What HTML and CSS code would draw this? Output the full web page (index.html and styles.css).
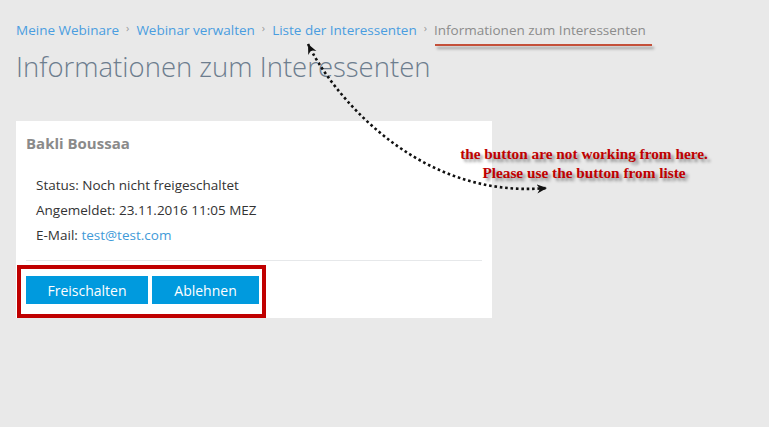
FILE: index.html
```html
<!DOCTYPE html>
<html lang="de">
<head>
<meta charset="utf-8">
<title>Informationen zum Interessenten</title>
<link rel="stylesheet" href="styles.css">
</head>
<body>
<div class="page">
  <nav class="crumbs">
    <a class="crumb link">Meine Webinare</a><span class="sep">›</span>
    <a class="crumb link">Webinar verwalten</a><span class="sep">›</span>
    <a class="crumb link">Liste der Interessenten</a><span class="sep">›</span>
    <span class="crumb current">Informationen zum Interessenten</span>
  </nav>
  <h1 class="title">Informationen zum Interessenten</h1>
  <section class="card">
    <h2 class="name">Bakli Boussaa</h2>
    <div class="details">
      <div class="row"><span class="label">Status:</span> Noch nicht freigeschaltet</div>
      <div class="row"><span class="label">Angemeldet:</span> 23.11.2016 11:05 MEZ</div>
      <div class="row"><span class="label">E-Mail:</span> <a class="mail">test@test.com</a></div>
    </div>
    <div class="divider"></div>
    <div class="actions">
      <button class="btn btn-approve">Freischalten</button>
      <button class="btn btn-reject">Ablehnen</button>
    </div>
  </section>
</div>
<div class="note">the button are not working from here.<br>Please use the button from liste</div>
<svg class="arrow" width="769" height="427" viewBox="0 0 769 427">
  <defs>
    <marker id="head" markerUnits="userSpaceOnUse" markerWidth="12" markerHeight="10" refX="10" refY="4.5" orient="auto-start-reverse">
      <path d="M0,0 L10,4.5 L0,9 L3,4.5 Z" fill="#111"/>
    </marker>
  </defs>
  <path d="M308,44 C330,90 415,200 547,188" fill="none" stroke="#111" stroke-width="2.6" stroke-dasharray="2.6 2.8" marker-start="url(#head)" marker-end="url(#head)"/>
</svg>
</body>
</html>
```
FILE: styles.css
```css
html, body {
  margin: 0;
  padding: 0;
}
body {
  background: #e9e9e9;
  font-family: "Open Sans", "Noto Sans", "DejaVu Sans", sans-serif;
  width: 769px;
  height: 427px;
  overflow: hidden;
  position: relative;
}
.page {
  padding: 20px 16px 0;
}
.crumbs {
  display: flex;
  align-items: center;
  font-size: 13.5px;
  line-height: 20px;
  white-space: nowrap;
}
.crumb.link {
  color: #4a9de0;
  text-decoration: none;
}
.sep {
  color: #9a9a9a;
  font-size: 11px;
  margin: 0 7px;
  position: relative;
  top: -2px;
}
.crumb.current {
  color: #8c8c8c;
  position: relative;
}
.crumb.current::after {
  content: "";
  position: absolute;
  left: 1px;
  right: -6px;
  top: 23.5px;
  height: 2.5px;
  background: #c4503a;
  box-shadow: 2px 3px 3px rgba(0, 0, 0, 0.35);
}
.title {
  margin: 9px 0 0;
  font-size: 27.5px;
  line-height: 36px;
  font-weight: 300;
  color: #6d7d8e;
}
.card {
  margin-top: 36px;
  width: 476px;
  background: #fff;
}
.name {
  margin: 0;
  padding: 12px 10px 0;
  font-size: 15px;
  line-height: 20px;
  font-weight: 700;
  color: #8a8a8a;
}
.details {
  padding: 20px 20px 0;
  font-size: 13.5px;
  line-height: 25px;
  color: #333;
}
.mail {
  color: #3f9ad8;
}
.divider {
  margin: 12px 10px 0;
  height: 1px;
  background: #e6e8ea;
}
.actions {
  margin: 4px 0 0 1px;
  box-sizing: border-box;
  width: 249px;
  border: 4px solid #c00000;
  padding: 7px 3px 10px 5px;
  display: flex;
  gap: 4px;
}
.btn {
  height: 28px;
  border: 0;
  background: #009ade;
  color: #fff;
  font-family: inherit;
  font-size: 14px;
  padding: 0;
  cursor: pointer;
}
.btn-approve {
  width: 122px;
}
.btn-reject {
  width: 107px;
}
.note {
  position: absolute;
  left: 434px;
  top: 144px;
  width: 300px;
  text-align: center;
  font-family: "Liberation Serif", "Times New Roman", serif;
  font-weight: 700;
  font-size: 15.3px;
  line-height: 19px;
  color: #c00000;
  text-shadow: 3px 3px 3px rgba(0, 0, 0, 0.4);
}
.arrow {
  position: absolute;
  left: 0;
  top: 0;
  pointer-events: none;
}
```
